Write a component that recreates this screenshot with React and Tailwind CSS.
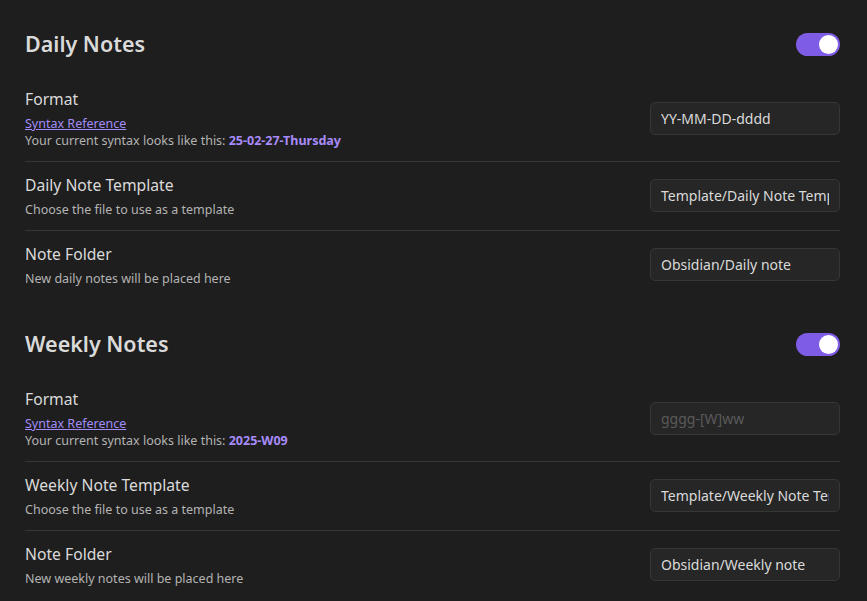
import React, { useState } from 'react';

const font = { fontFamily: '"Noto Sans", "Liberation Sans", sans-serif' };

const Toggle = ({ on, onChange }) => (
    <button
        onClick={() => onChange(!on)}
        className={`w-[44px] h-[23px] rounded-full flex items-center px-[2px] ${on ? 'bg-[#7f5ce6] justify-end' : 'bg-[#3f3f3f] justify-start'}`}
    >
        <span className="w-[19px] h-[19px] rounded-full bg-white block" />
    </button>
);

const TextBox = ({ value, placeholder, disabled }) => (
    <input
        readOnly
        disabled={disabled}
        value={value || ''}
        placeholder={placeholder}
        className="w-[190px] h-[33px] rounded-[5px] bg-[#262626] border border-[#363636] pl-[10px] pr-[10px] text-[14px] text-[#dadada] placeholder-[#5a5a5a] outline-none"
        style={font}
    />
);

const Row = ({ title, children, control, last }) => (
    <div className={`flex items-center justify-between pt-[11px] pb-[12px] ${last ? '' : 'border-b border-[#363636]'}`}>
        <div>
            <div className="text-[15.7px] leading-[24px] text-[#dadada]">{title}</div>
            <div className="mt-1 text-[12.5px] leading-[17px] text-[#b3b3b3]">{children}</div>
        </div>
        {control}
    </div>
);

const FormatDesc = ({ sample }) => (
    <>
        <a href="#" className="block underline text-[#a38cf8]">Syntax Reference</a>
        <div>
            Your current syntax looks like this:{' '}
            <span className="font-bold text-[#a88bfa]">{sample}</span>
        </div>
    </>
);

const Section = ({ title, enabled, setEnabled, rows, first }) => (
    <div className={first ? '' : 'mt-[21px]'}>
        <div className="flex items-center justify-between h-[48px] mb-2">
            <h2 className="text-[21.5px] font-semibold text-[#dadada]">{title}</h2>
            <Toggle on={enabled} onChange={setEnabled} />
        </div>
        {rows.map((r, i) => (
            <Row key={r.title} title={r.title} control={r.control} last={i === rows.length - 1}>
                {r.desc}
            </Row>
        ))}
    </div>
);

export default function App() {
    const [daily, setDaily] = useState(true);
    const [weekly, setWeekly] = useState(true);

    return (
        <div className="min-h-screen bg-[#1e1e1e] pt-5 pl-[25px] pr-[27px]" style={font}>
            <Section
                first
                title="Daily Notes"
                enabled={daily}
                setEnabled={setDaily}
                rows={[
                    { title: 'Format', desc: <FormatDesc sample="25-02-27-Thursday" />, control: <TextBox value="YY-MM-DD-dddd" /> },
                    { title: 'Daily Note Template', desc: 'Choose the file to use as a template', control: <TextBox value="Template/Daily Note Template" /> },
                    { title: 'Note Folder', desc: 'New daily notes will be placed here', control: <TextBox value="Obsidian/Daily note" /> },
                ]}
            />
            <Section
                title="Weekly Notes"
                enabled={weekly}
                setEnabled={setWeekly}
                rows={[
                    { title: 'Format', desc: <FormatDesc sample="2025-W09" />, control: <TextBox placeholder="gggg-[W]ww" disabled /> },
                    { title: 'Weekly Note Template', desc: 'Choose the file to use as a template', control: <TextBox value="Template/Weekly Note Template" /> },
                    { title: 'Note Folder', desc: 'New weekly notes will be placed here', control: <TextBox value="Obsidian/Weekly note" /> },
                ]}
            />
        </div>
    );
}
